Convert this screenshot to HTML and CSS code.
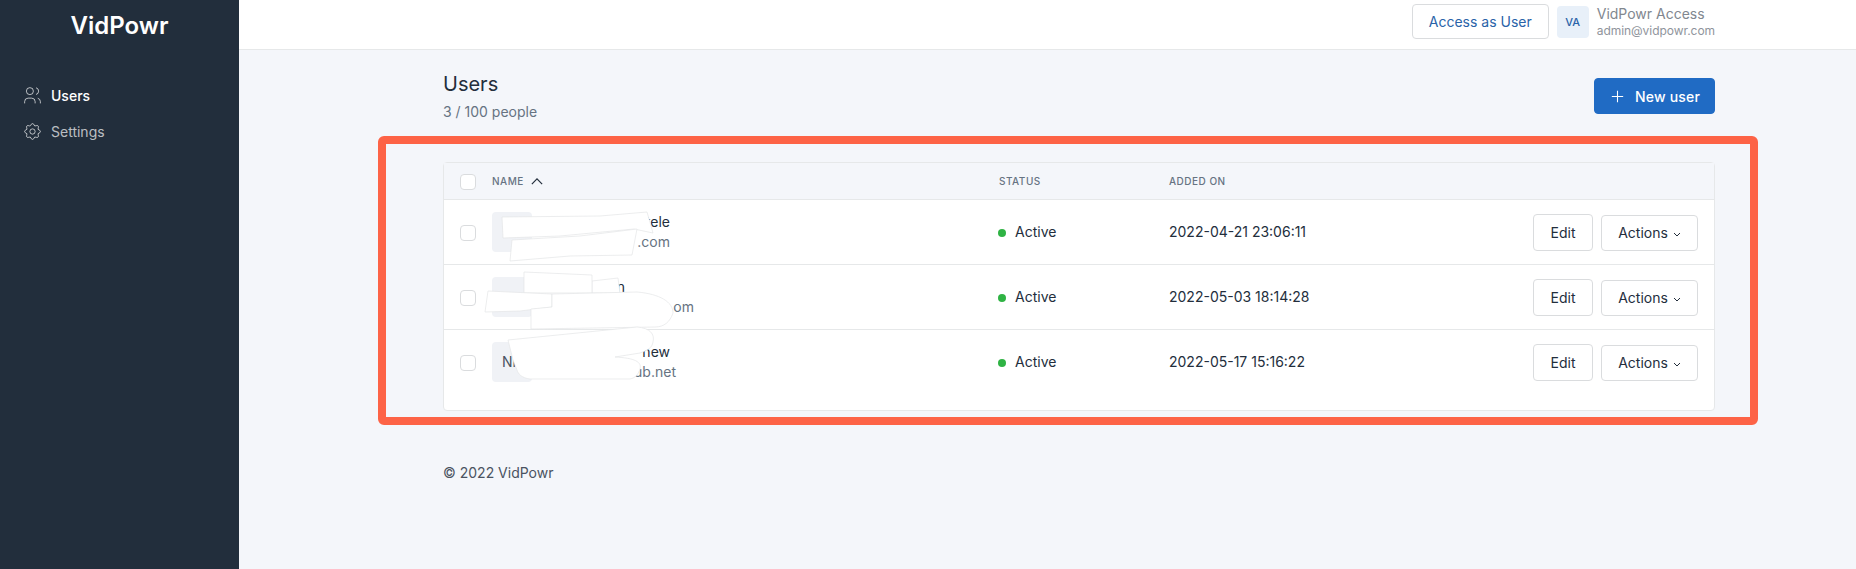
FILE: index.html
```html
<!DOCTYPE html>
<html lang="en">
<head>
    <meta charset="UTF-8">
    <title>Users - VidPowr</title>
    <link rel="stylesheet" href="styles.css">
</head>
<body>
    <aside class="sidebar">
        <div class="brand">VidPowr</div>
        <nav class="nav">
            <a class="nav-link active">
                <svg class="nav-icon" viewBox="0 0 24 24"><circle cx="9" cy="7" r="4"/><path d="M3 21v-2a4 4 0 0 1 4-4h4a4 4 0 0 1 4 4v2"/><path d="M16 3.13a4 4 0 0 1 0 7.75"/><path d="M21 21v-2a4 4 0 0 0-3-3.85"/></svg>
                Users
            </a>
            <a class="nav-link">
                <svg class="nav-icon" viewBox="0 0 24 24"><path d="M10.325 4.317c.426-1.756 2.924-1.756 3.35 0a1.724 1.724 0 0 0 2.573 1.066c1.543-.94 3.31.826 2.37 2.37a1.724 1.724 0 0 0 1.065 2.572c1.756.426 1.756 2.924 0 3.35a1.724 1.724 0 0 0-1.066 2.573c.94 1.543-.826 3.31-2.37 2.37a1.724 1.724 0 0 0-2.572 1.065c-.426 1.756-2.924 1.756-3.35 0a1.724 1.724 0 0 0-2.573-1.066c-1.543.94-3.31-.826-2.37-2.37a1.724 1.724 0 0 0-1.065-2.572c-1.756-.426-1.756-2.924 0-3.35a1.724 1.724 0 0 0 1.066-2.573c-.94-1.543.826-3.31 2.37-2.37 1 .608 2.296.07 2.572-1.065z"/><circle cx="12" cy="12" r="3"/></svg>
                Settings
            </a>
        </nav>
    </aside>

    <div class="main">
        <header class="topbar">
            <button class="btn btn-access">Access as User</button>
            <div class="account">
                <span class="account-avatar">VA</span>
                <div>
                    <div class="account-name">VidPowr Access</div>
                    <div class="account-mail">admin@vidpowr.com</div>
                </div>
            </div>
        </header>

        <div class="content">
            <div class="page-head">
                <div>
                    <h1>Users</h1>
                    <div class="page-sub">3 / 100 people</div>
                </div>
                <button class="btn btn-primary">
                    <svg class="plus-icon" viewBox="0 0 24 24"><path d="M12 4v16M4 12h16"/></svg>
                    New user
                </button>
            </div>

            <div class="card">
                <table>
                    <thead>
                        <tr>
                            <th class="col-check"><span class="check"></span></th>
                            <th class="col-name">Name <svg class="sort-icon" viewBox="0 0 14 8"><path d="M1 7l6-6 6 6"/></svg></th>
                            <th class="col-status">Status</th>
                            <th class="col-date">Added on</th>
                            <th></th>
                        </tr>
                    </thead>
                    <tbody>
                        <tr>
                            <td class="col-check"><span class="check"></span></td>
                            <td>
                                <div class="user">
                                    <span class="user-avatar"></span>
                                    <div class="user-text first">
                                        <div class="user-name">tele</div>
                                        <div class="user-mail">.com</div>
                                    </div>
                                </div>
                            </td>
                            <td><span class="dot"></span>Active</td>
                            <td>2022-04-21 23:06:11</td>
                            <td>
                                <div class="row-actions">
                                    <button class="btn btn-edit">Edit</button>
                                    <button class="btn btn-actions">Actions <svg class="caret" viewBox="0 0 8 5"><path d="M1 1l3 3 3-3"/></svg></button>
                                </div>
                            </td>
                        </tr>
                        <tr>
                            <td class="col-check"><span class="check"></span></td>
                            <td>
                                <div class="user">
                                    <span class="user-avatar"></span>
                                    <div class="user-text second">
                                        <div class="user-name">n</div>
                                        <div class="user-mail">om</div>
                                    </div>
                                </div>
                            </td>
                            <td><span class="dot"></span>Active</td>
                            <td>2022-05-03 18:14:28</td>
                            <td>
                                <div class="row-actions">
                                    <button class="btn btn-edit">Edit</button>
                                    <button class="btn btn-actions">Actions <svg class="caret" viewBox="0 0 8 5"><path d="M1 1l3 3 3-3"/></svg></button>
                                </div>
                            </td>
                        </tr>
                        <tr>
                            <td class="col-check"><span class="check"></span></td>
                            <td>
                                <div class="user">
                                    <span class="user-avatar">Nn</span>
                                    <div class="user-text third">
                                        <div class="user-name">new</div>
                                        <div class="user-mail">ub.net</div>
                                    </div>
                                </div>
                            </td>
                            <td><span class="dot"></span>Active</td>
                            <td>2022-05-17 15:16:22</td>
                            <td>
                                <div class="row-actions">
                                    <button class="btn btn-edit">Edit</button>
                                    <button class="btn btn-actions">Actions <svg class="caret" viewBox="0 0 8 5"><path d="M1 1l3 3 3-3"/></svg></button>
                                </div>
                            </td>
                        </tr>
                    </tbody>
                </table>

                <!-- scribbles over the names, coordinates are card x/y + 443,162 -->
                <svg class="scribbles" viewBox="443 162 300 240">
                    <path d="M502 217L600 216 647 212Q650 222 653 233L634 229 560 236 503 238z"/>
                    <path d="M512 240L580 236 637 229 632 255 570 256 510 261z"/>
                    <path d="M592 281L618 278 620 293 592 293z"/>
                    <path d="M524 272L592 275 592 293 524 293z"/>
                    <path d="M488 291L552 294 552 307 520 311 485 312z"/>
                    <path d="M552 294L637 292C660 294 673 302 673 313 670 322 664 327 655 327L531 329 531 309 552 307z"/>
                    <path d="M508 340L637 327C650 328 655 334 653 342 652 348 648 350 640 353L615 357C635 358 642 362 640 369 638 375 635 378 630 379L530 379C522 378 518 374 517 370L513 360z"/>
                </svg>

                <div class="highlight"></div>
            </div>

            <footer class="footer">&copy; 2022 VidPowr</footer>
        </div>
    </div>
</body>
</html>
```

FILE: styles.css
```css
* {
    box-sizing: border-box;
}

body {
    margin: 0;
    height: 569px;
    display: flex;
    overflow: hidden;
    font-family: Inter, "Noto Sans", sans-serif;
    font-size: 14px;
    color: #232e3c;
    background-color: #f4f6fa;
}

.sidebar {
    width: 239px;
    flex-shrink: 0;
    background-color: #222e3c;
    color: #fff;
}

.brand {
    text-align: center;
    font-size: 24px;
    font-weight: 600;
    line-height: 30px;
    padding-top: 11px;
}

.nav {
    margin-top: 36px;
    padding-left: 22px;
}

.nav-link {
    display: flex;
    align-items: center;
    gap: 8px;
    height: 36px;
    color: rgba(255, 255, 255, 0.7);
}

.nav-link.active {
    color: #fff;
    font-weight: 500;
}

.nav-icon {
    width: 21px;
    height: 21px;
    fill: none;
    stroke: rgba(255, 255, 255, 0.7);
    stroke-width: 1.1;
}

.main {
    flex: 1;
    min-width: 0;
}

.topbar {
    height: 50px;
    display: flex;
    justify-content: flex-end;
    align-items: flex-start;
    gap: 8px;
    padding: 4px 141px 0 0;
    background: #fff;
    border-bottom: 1px solid #e6e8e9;
}

.btn {
    font: inherit;
    border-radius: 4px;
    cursor: pointer;
    background: #fff;
    border: 1px solid #dadcde;
    color: #232e3c;
    padding: 0;
}

.btn-access {
    width: 137px;
    height: 35px;
    color: #2a63a8;
}

.account {
    display: flex;
    gap: 8px;
    padding-top: 2px;
}

.account-avatar {
    width: 32px;
    height: 32px;
    display: flex;
    align-items: center;
    justify-content: center;
    border-radius: 4px;
    background: #e8f0f9;
    color: #2a63a8;
    font-size: 11px;
    font-weight: 500;
}

.account-name {
    font-size: 14px;
    line-height: 16px;
    color: #81878f;
}

.account-mail {
    font-size: 12px;
    line-height: 16px;
    margin-top: 1px;
    letter-spacing: -0.05px;
    color: #8f949c;
}

.content {
    padding: 0 141px 0 204px;
}

.page-head {
    display: flex;
    justify-content: space-between;
    align-items: flex-start;
    padding-top: 20px;
    height: 112px;
}

h1 {
    margin: 0;
    font-size: 20px;
    font-weight: 400;
    line-height: 28px;
}

.page-sub {
    margin-top: 4px;
    line-height: 20px;
    color: #667382;
}

.btn-primary {
    width: 121px;
    height: 36px;
    margin-top: 8px;
    display: flex;
    align-items: center;
    justify-content: center;
    gap: 9px;
    background: #206bc4;
    border-color: #206bc4;
    color: #fff;
    font-weight: 500;
    letter-spacing: 0.2px;
}

.plus-icon {
    width: 17px;
    height: 17px;
    fill: none;
    stroke: #fff;
    stroke-width: 1.5;
}

.card {
    position: relative;
    height: 249px;
    background: #fff;
    border: 1px solid #e6e8e9;
    border-radius: 4px;
}

table {
    width: 100%;
    border-collapse: collapse;
    table-layout: fixed;
}

th {
    height: 36px;
    padding: 0;
    text-align: left;
    font-size: 10px;
    font-weight: 500;
    letter-spacing: 0.5px;
    text-transform: uppercase;
    color: #667382;
    background: #f4f6fa;
    border-bottom: 1px solid #e6e8e9;
}

td {
    height: 65px;
    padding: 0;
    border-bottom: 1px solid #e6e8e9;
}

tbody tr:last-child td {
    border-bottom: none;
}

.col-check {
    width: 48px;
    padding-left: 16px;
}

.col-name {
    width: 507px;
}

.col-status {
    width: 170px;
}

.col-date {
    width: 230px;
}

.check {
    display: block;
    width: 16px;
    height: 16px;
    margin-top: 3px;
    background: #fff;
    border: 1px solid #dadcde;
    border-radius: 4px;
}

th .check {
    margin-top: 2px;
}

.sort-icon {
    width: 12px;
    height: 7px;
    margin-left: 4px;
    fill: none;
    stroke: #232e3c;
    stroke-width: 1.4;
}

.user {
    display: flex;
    gap: 12px;
    align-items: center;
}

.user-avatar {
    width: 40px;
    height: 40px;
    display: flex;
    align-items: center;
    padding-left: 10px;
    border-radius: 4px;
    background: #f0f2f6;
    color: #4a5361;
}

.user-text {
    display: flex;
    flex-direction: column;
    align-items: flex-end;
    line-height: 20px;
}

.user-text.first {
    width: 126px;
}

.user-text.second {
    width: 150px;
}

.user-text.second .user-name {
    margin-right: 69px;
}

.user-text.third {
    width: 132px;
}

.user-text.third .user-name {
    margin-right: 6px;
}

.user-mail {
    color: #667382;
}

.dot {
    display: inline-block;
    width: 8px;
    height: 8px;
    margin: 0 9px 0 -1px;
    border-radius: 50%;
    background: #2fb344;
}

.row-actions {
    display: flex;
    justify-content: flex-end;
    align-items: flex-end;
    gap: 8px;
    padding: 1px 16px 0 0;
}

.btn-edit {
    width: 60px;
    height: 37px;
}

.btn-actions {
    width: 97px;
    height: 36px;
}

.caret {
    width: 8px;
    height: 5px;
    margin-left: 1px;
    vertical-align: 1px;
    fill: none;
    stroke: #232e3c;
    stroke-width: 1;
}

.scribbles {
    position: absolute;
    top: -1px;
    left: -1px;
    width: 300px;
    height: 240px;
    fill: #fff;
    stroke: #e4e5e7;
    stroke-width: 0.7;
}

.highlight {
    position: absolute;
    top: -27px;
    left: -66px;
    right: -44px;
    bottom: -15px;
    border: 8px solid #fd6346;
    border-radius: 6px;
}

.footer {
    margin-top: 52px;
    line-height: 20px;
    color: #4a5361;
}
```
